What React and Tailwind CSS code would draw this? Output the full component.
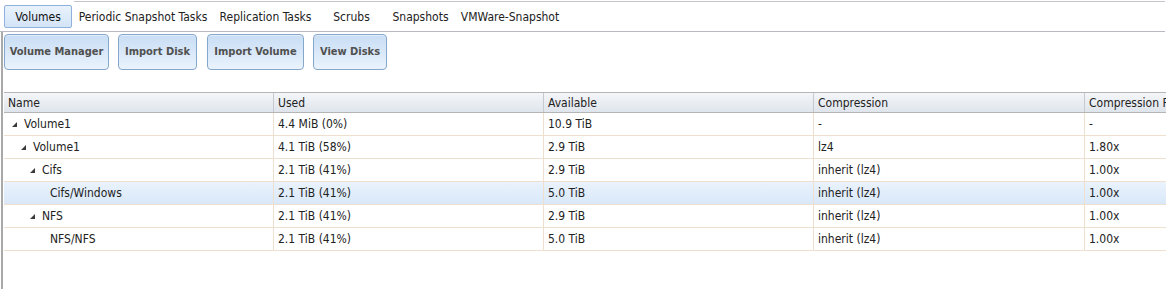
import React from "react";

const font = { fontFamily: "'DejaVu Sans Condensed', 'DejaVu Sans', Tahoma, sans-serif" };

const tabs = [
  { label: "Volumes", w: "w-[68px]", active: true },
  { label: "Periodic Snapshot Tasks", w: "w-[142px]" },
  { label: "Replication Tasks", w: "w-[103px]" },
  { label: "Scrubs", w: "w-[69px]" },
  { label: "Snapshots", w: "w-[69px]" },
  { label: "VMWare-Snapshot", w: "w-[110px]" },
];

const buttons = [
  { label: "Volume Manager", w: "w-[105px] mr-[9px]" },
  { label: "Import Disk", w: "w-[79px] mr-[10px]" },
  { label: "Import Volume", w: "w-[97px] mr-[9px]" },
  { label: "View Disks", w: "w-[74px]" },
];

const rows = [
  { name: "Volume1", level: 0, expand: true, used: "4.4 MiB (0%)", avail: "10.9 TiB", comp: "-", ratio: "-" },
  { name: "Volume1", level: 1, expand: true, used: "4.1 TiB (58%)", avail: "2.9 TiB", comp: "lz4", ratio: "1.80x" },
  { name: "Cifs", level: 2, expand: true, used: "2.1 TiB (41%)", avail: "2.9 TiB", comp: "inherit (lz4)", ratio: "1.00x" },
  { name: "Cifs/Windows", level: 3, used: "2.1 TiB (41%)", avail: "5.0 TiB", comp: "inherit (lz4)", ratio: "1.00x", selected: true },
  { name: "NFS", level: 2, expand: true, used: "2.1 TiB (41%)", avail: "2.9 TiB", comp: "inherit (lz4)", ratio: "1.00x" },
  { name: "NFS/NFS", level: 3, used: "2.1 TiB (41%)", avail: "5.0 TiB", comp: "inherit (lz4)", ratio: "1.00x" },
];

// padding of the name cell per tree level (expanded nodes carry an arrow)
const indent = ["pl-[8px]", "pl-[17px]", "pl-[26px]", "pl-[46px]"];

const cols = "grid grid-cols-[269px_270px_270px_271px_90px]";

const Arrow = () => (
  <svg width="5" height="5" viewBox="0 0 5 5" className="mr-[7px] shrink-0">
    <path d="M5 0 L5 5 L0 5 Z" fill="#3a3a3a" />
  </svg>
);

export default function App() {
  return (
    <div className="w-[1166px] h-[289px] bg-white overflow-hidden text-[12px] text-[#222]" style={font}>
      {/* tab strip */}
      <div className="ml-[74px] mr-[1px] mt-[1px] h-px bg-[#c4c4cc]" />
      <div className="flex items-center h-[30px] pl-[4px] border-b border-[#b9b9c4] mr-[1px]">
        {tabs.map((t) =>
          t.active ? (
            <div
              key={t.label}
              className={`${t.w} h-[23px] flex items-center justify-center rounded-[2px] border border-[#8fb1dd] bg-gradient-to-b from-[#e9f2fc] to-[#d3e4f7] text-[#111]`}
            >
              {t.label}
            </div>
          ) : (
            <div key={t.label} className={`${t.w} text-center text-[#222]`}>
              {t.label}
            </div>
          )
        )}
      </div>

      <div className="border-l-2 border-[#a9a9a9] ml-[1px] h-full">
        {/* buttons */}
        <div className="flex pl-[1px] pt-[2px] h-[60px]">
          {buttons.map((b) => (
            <button
              key={b.label}
              className={`${b.w} h-[36px] rounded-[4px] border border-[#86a7cc] bg-gradient-to-b from-[#c8ddf4] to-[#eaf3fd] text-[11px] font-bold text-[#505050] shadow-[inset_0_1px_0_rgba(255,255,255,0.5)]`}
            >
              {b.label}
            </button>
          ))}
        </div>

        {/* grid */}
        <div className="ml-[1px]">
          <div className={`${cols} h-[21px] border-t border-b border-[#b5b5b5] bg-gradient-to-b from-[#f4f6f9] to-[#dfe5ec]`}>
            {["Name", "Used", "Available", "Compression", "Compression Ratio"].map((h, i) => (
              <div
                key={h}
                className={`flex items-center pl-[4px] whitespace-nowrap overflow-hidden ${i > 0 ? "border-l border-[#c6c9cf]" : ""}`}
              >
                {h}
              </div>
            ))}
          </div>
          {rows.map((r, idx) => (
            <div
              key={idx}
              className={`${cols} h-[23px] border-b border-[#efdfcf] ${
                r.selected ? "bg-gradient-to-b from-[#eaf3fd] to-[#d9e8f8]" : "bg-white"
              }`}
            >
              <div className={`flex items-center ${indent[r.level]}`}>
                {r.expand && <Arrow />}
                {r.name}
              </div>
              <div className="flex items-center pl-[4px] border-l border-[#efdfcf]">{r.used}</div>
              <div className="flex items-center pl-[4px] border-l border-[#efdfcf]">{r.avail}</div>
              <div className="flex items-center pl-[4px] border-l border-[#efdfcf]">{r.comp}</div>
              <div className="flex items-center pl-[4px] border-l border-[#efdfcf]">{r.ratio}</div>
            </div>
          ))}
        </div>
      </div>
    </div>
  );
}
